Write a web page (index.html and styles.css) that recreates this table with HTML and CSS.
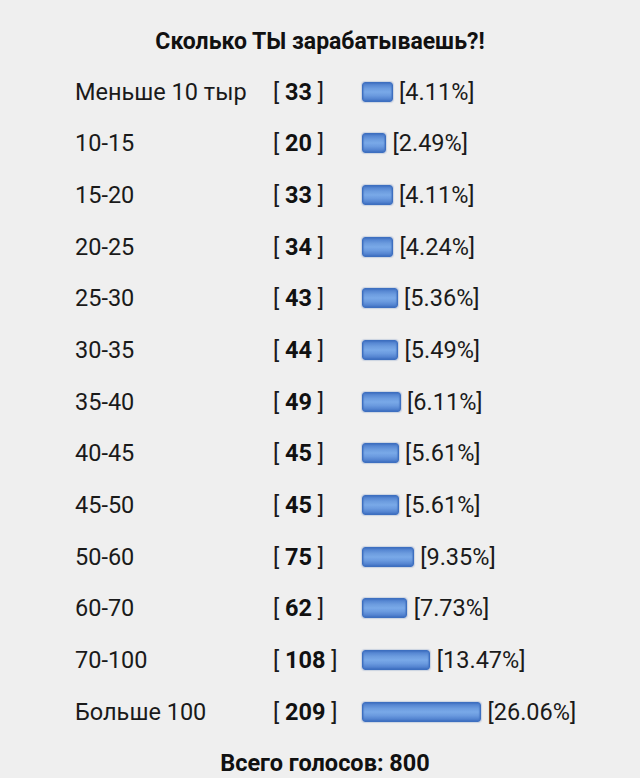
FILE: index.html
```html
<!DOCTYPE html>
<html lang="ru">
<head>
<meta charset="utf-8">
<link rel="stylesheet" href="styles.css">
</head>
<body>
<div class="poll">
  <h1 class="title">Сколько ТЫ зарабатываешь?!</h1>
  <div class="rows">
    <div class="row"><span class="label">Меньше 10 тыр</span><span class="count">[ <b>33</b> ]</span><span class="res"><span class="bar" style="width:30.6px"></span><span class="pct">[4.11%]</span></span></div>
    <div class="row"><span class="label">10-15</span><span class="count">[ <b>20</b> ]</span><span class="res"><span class="bar" style="width:24px"></span><span class="pct">[2.49%]</span></span></div>
    <div class="row"><span class="label">15-20</span><span class="count">[ <b>33</b> ]</span><span class="res"><span class="bar" style="width:30.6px"></span><span class="pct">[4.11%]</span></span></div>
    <div class="row"><span class="label">20-25</span><span class="count">[ <b>34</b> ]</span><span class="res"><span class="bar" style="width:31.1px"></span><span class="pct">[4.24%]</span></span></div>
    <div class="row"><span class="label">25-30</span><span class="count">[ <b>43</b> ]</span><span class="res"><span class="bar" style="width:35.6px"></span><span class="pct">[5.36%]</span></span></div>
    <div class="row"><span class="label">30-35</span><span class="count">[ <b>44</b> ]</span><span class="res"><span class="bar" style="width:36.1px"></span><span class="pct">[5.49%]</span></span></div>
    <div class="row"><span class="label">35-40</span><span class="count">[ <b>49</b> ]</span><span class="res"><span class="bar" style="width:38.6px"></span><span class="pct">[6.11%]</span></span></div>
    <div class="row"><span class="label">40-45</span><span class="count">[ <b>45</b> ]</span><span class="res"><span class="bar" style="width:36.6px"></span><span class="pct">[5.61%]</span></span></div>
    <div class="row"><span class="label">45-50</span><span class="count">[ <b>45</b> ]</span><span class="res"><span class="bar" style="width:36.6px"></span><span class="pct">[5.61%]</span></span></div>
    <div class="row"><span class="label">50-60</span><span class="count">[ <b>75</b> ]</span><span class="res"><span class="bar" style="width:51.7px"></span><span class="pct">[9.35%]</span></span></div>
    <div class="row"><span class="label">60-70</span><span class="count">[ <b>62</b> ]</span><span class="res"><span class="bar" style="width:45.2px"></span><span class="pct">[7.73%]</span></span></div>
    <div class="row"><span class="label">70-100</span><span class="count">[ <b>108</b> ]</span><span class="res"><span class="bar" style="width:68.3px"></span><span class="pct">[13.47%]</span></span></div>
    <div class="row"><span class="label">Больше 100</span><span class="count">[ <b>209</b> ]</span><span class="res"><span class="bar" style="width:119px"></span><span class="pct">[26.06%]</span></span></div>
  </div>
  <div class="total">Всего голосов: 800</div>
</div>
</body>
</html>
```

FILE: styles.css
```css
html, body {
  margin: 0;
  padding: 0;
  background: #efefef;
}
body {
  font-family: Roboto, "Noto Sans", sans-serif;
  color: #1a1a1a;
}
.poll {
  padding-top: 27px;
}
.title {
  margin: 0;
  font-size: 23px;
  font-weight: 700;
  line-height: 30px;
  text-align: center;
  color: #111;
}
.rows {
  margin-top: 9px;
  padding-left: 75px;
}
.row {
  display: grid;
  grid-template-columns: 198px 89px auto;
  align-items: center;
  height: 51.67px;
  font-size: 23.5px;
}
.count b {
  font-weight: 700;
  color: #111;
}
.res {
  display: flex;
  align-items: center;
  gap: 6.5px;
}
.bar {
  display: inline-block;
  height: 20px;
  box-sizing: border-box;
  border: 1px solid #3d6fc0;
  border-radius: 3px;
  background: linear-gradient(to bottom, #4a7bcb 0%, #6c9cdf 30%, #79a9e8 50%, #6a9adf 70%, #4677c8 100%);
  box-shadow: inset 0 0 1px 1px rgba(60, 110, 190, 0.5), 0 0 1px 1px rgba(60, 100, 170, 0.2);
}
.total {
  margin-top: 10px;
  text-align: center;
  font-size: 23.5px;
  font-weight: 700;
  line-height: 30px;
  color: #111;
  padding-left: 10px;
}
```
